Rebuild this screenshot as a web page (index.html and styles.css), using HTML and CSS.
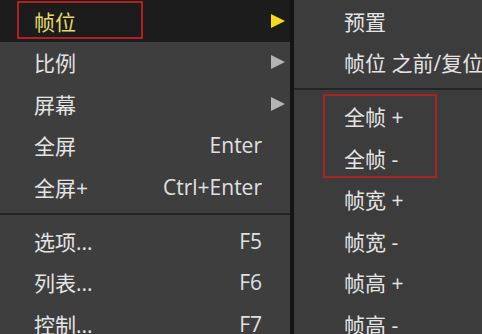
FILE: index.html
```html
<!DOCTYPE html>
<html lang="zh-CN">
<head>
    <meta charset="UTF-8">
    <meta name="viewport" content="width=device-width, initial-scale=1.0">
    <title>帧位菜单</title>
    <link rel="stylesheet" href="styles.css">
</head>
<body>
    <div class="menus">
        <div class="menu main">
            <div class="item active">
                <span class="label">帧位</span>
                <span class="key"></span>
                <span class="arrow"></span>
                <span class="mark mark-main"></span>
            </div>
            <div class="item">
                <span class="label">比例</span>
                <span class="key"></span>
                <span class="arrow"></span>
            </div>
            <div class="item">
                <span class="label">屏幕</span>
                <span class="key"></span>
                <span class="arrow"></span>
            </div>
            <div class="item">
                <span class="label">全屏</span>
                <span class="key">Enter</span>
                <span class="arrow none"></span>
            </div>
            <div class="item">
                <span class="label">全屏+</span>
                <span class="key">Ctrl+Enter</span>
                <span class="arrow none"></span>
            </div>
            <div class="sep"></div>
            <div class="item">
                <span class="label">选项...</span>
                <span class="key">F5</span>
                <span class="arrow none"></span>
            </div>
            <div class="item">
                <span class="label">列表...</span>
                <span class="key">F6</span>
                <span class="arrow none"></span>
            </div>
            <div class="item">
                <span class="label">控制...</span>
                <span class="key">F7</span>
                <span class="arrow none"></span>
            </div>
        </div>

        <div class="menu sub">
            <div class="item"><span class="label">预置</span></div>
            <div class="item"><span class="label">帧位 之前/复位</span></div>
            <div class="sep"></div>
            <div class="group">
                <div class="item"><span class="label">全帧 +</span></div>
                <div class="item"><span class="label">全帧 -</span></div>
                <span class="mark mark-sub"></span>
            </div>
            <div class="item"><span class="label">帧宽 +</span></div>
            <div class="item"><span class="label">帧宽 -</span></div>
            <div class="item"><span class="label">帧高 +</span></div>
            <div class="item"><span class="label">帧高 -</span></div>
        </div>
    </div>
</body>
</html>
```

FILE: styles.css
```css
html, body {
    margin: 0;
    height: 100%;
    overflow: hidden;
}
body {
    font-family: "Open Sans", "Noto Sans CJK SC", sans-serif;
    font-size: 21px;
    color: #e4e4e4;
    background-color: #3d3d3d;
}
.menus {
    display: flex;
    height: 100%;
}
.menu {
    background-color: #3e3e3e;
}
.menu.main {
    width: 290px;
    flex-shrink: 0;
    border-right: 4px solid #141414;
}
.menu.sub {
    flex: 1;
    min-width: 0;
    background-color: #3c3c3c;
}
.item {
    position: relative;
    display: flex;
    align-items: center;
    height: 41.5px;
    padding: 0 5px 0 34px;
    white-space: nowrap;
}
.menu.sub .item {
    padding-left: 50px;
}
.item .label {
    flex: 1;
}
.item .key {
    color: #e0e0e0;
}
.item .arrow {
    width: 0;
    height: 0;
    margin-left: 9px;
    border-top: 7px solid transparent;
    border-bottom: 7px solid transparent;
    border-left: 14px solid #b4b4b4;
}
.item .arrow.none {
    visibility: hidden;
}
.item.active {
    background-color: #1c1c1c;
    color: #e6da6a;
}
.item.active .arrow {
    border-left-color: #f2dc1c;
}
.sep {
    height: 0;
    margin: 5px 0 5.5px;
    border-top: 2px solid #242424;
}
.group {
    position: relative;
}
.mark {
    position: absolute;
    border: 2px solid #a82424;
    pointer-events: none;
}
.item .mark-main {
    left: 17px;
    top: 1px;
    width: 122px;
    height: 34px;
    border-color: #b02222;
}
.mark-sub {
    left: 29px;
    top: -2px;
    width: 110px;
    height: 80px;
}
```
